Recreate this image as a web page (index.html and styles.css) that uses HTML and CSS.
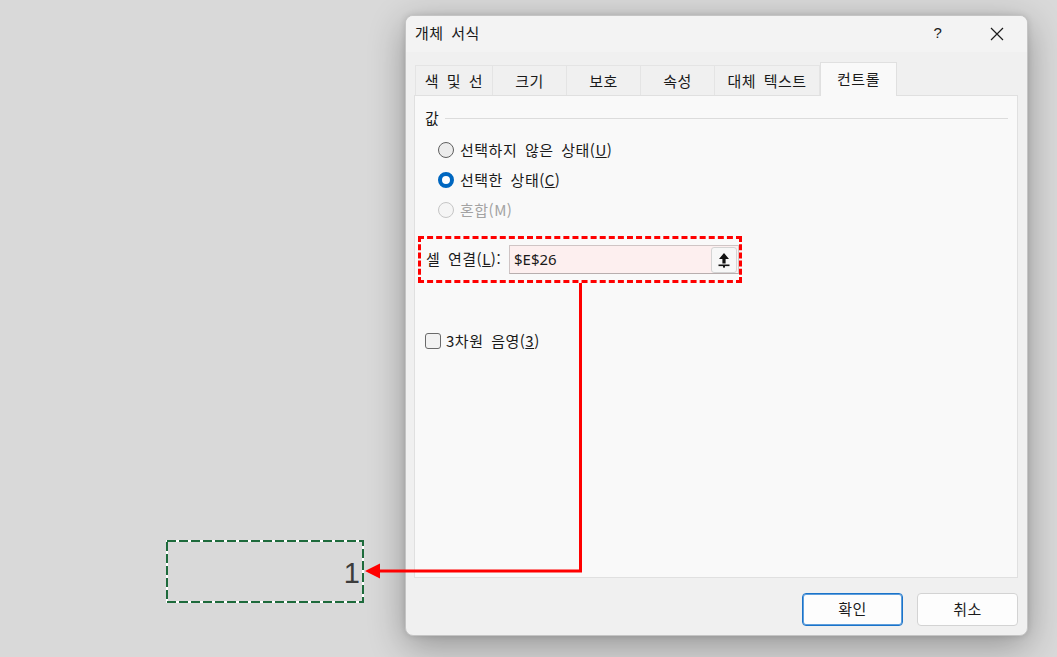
FILE: index.html
```html
<!DOCTYPE html>
<html lang="ko">
<head>
<meta charset="utf-8">
<title>개체 서식</title>
<link rel="stylesheet" href="styles.css">
</head>
<body>
<div class="desk">
  <div class="cell">
    <svg class="cell-ants" width="200" height="64" viewBox="0 0 200 64">
      <rect x="1" y="1" width="196" height="61" fill="none" stroke="#ffffff" stroke-width="2"/>
      <rect x="1" y="1" width="196" height="61" fill="none" stroke="#1e6b3c" stroke-width="2" stroke-dasharray="9 3"/>
    </svg>
    <span class="cell-value">1</span>
  </div>

  <div class="dialog">
    <div class="titlebar">
      <span class="title">개체 서식</span>
      <span class="tb-btn help">?</span>
      <span class="tb-btn close">
        <svg width="14" height="14" viewBox="0 0 14 14"><path d="M1 1 L13 13 M13 1 L1 13" stroke="#1b1b1b" stroke-width="1.2" fill="none"/></svg>
      </span>
    </div>
    <div class="body">
      <div class="tabs">
        <div class="tab t1">색 및 선</div>
        <div class="tab t2">크기</div>
        <div class="tab t3">보호</div>
        <div class="tab t4">속성</div>
        <div class="tab t5">대체 텍스트</div>
        <div class="tab t6 active">컨트롤</div>
      </div>
      <div class="panel">
        <div class="group-head"><span>값</span><div class="rule"></div></div>
        <div class="radios">
          <div class="radio-row"><span class="radio"></span><span class="lbl">선택하지 않은 상태(<u>U</u>)</span></div>
          <div class="radio-row"><span class="radio checked"></span><span class="lbl">선택한 상태(<u>C</u>)</span></div>
          <div class="radio-row disabled"><span class="radio"></span><span class="lbl">혼합(M)</span></div>
        </div>
        <div class="link-box">
          <span class="link-label">셀 연결(<u>L</u>):</span>
          <div class="ref-input">
            <span class="ref-text">$E$26</span>
            <span class="ref-btn">
              <svg width="12" height="16" viewBox="0 0 12 16">
                <path d="M6 1 L11 7 L7.6 7 L7.6 11.5 L4.4 11.5 L4.4 7 L1 7 Z" fill="#111"/>
                <rect x="0.5" y="12.5" width="11" height="1.6" fill="#111"/>
                <rect x="5" y="14" width="2" height="1.6" fill="#111"/>
              </svg>
            </span>
          </div>
        </div>
        <div class="check-row"><span class="checkbox"></span><span class="lbl">3차원 음영(<u>3</u>)</span></div>
      </div>
      <div class="footer">
        <span class="btn primary">확인</span>
        <span class="btn">취소</span>
      </div>
    </div>
  </div>

  <svg class="connector" width="1057" height="657" viewBox="0 0 1057 657">
    <path d="M580.5 283 L580.5 571 L378 571" fill="none" stroke="#ff0000" stroke-width="3"/>
    <polygon points="365,571 380,563.5 380,578.5" fill="#ff0000"/>
  </svg>
</div>
</body>
</html>
```

FILE: styles.css
```css
html, body {
  margin: 0;
  padding: 0;
}
body {
  background: #d9d9d9;
  font-family: "Noto Sans CJK KR", "Noto Sans", sans-serif;
  color: #1a1a1a;
  font-size: 15px;
  letter-spacing: 0.5px;
  word-spacing: 3px;
}
.desk {
  position: relative;
  width: 1057px;
  height: 657px;
  overflow: hidden;
}

/* spreadsheet cell with marching ants */
.cell {
  position: absolute;
  left: 166px;
  top: 540px;
  width: 200px;
  height: 64px;
  display: flex;
  align-items: flex-end;
  justify-content: flex-end;
}
.cell-ants {
  position: absolute;
  left: 0;
  top: 0;
}
.cell-value {
  font-family: "Liberation Sans", Arial, sans-serif;
  font-size: 29px;
  line-height: 29px;
  letter-spacing: 0;
  color: #3c3c3c;
  padding-right: 6px;
  padding-bottom: 16px;
}

/* dialog window */
.dialog {
  position: absolute;
  left: 405px;
  top: 15px;
  width: 623px;
  height: 621px;
  box-sizing: border-box;
  border: 1px solid #c4c4c4;
  border-radius: 8px;
  background: #f0f0f0;
  box-shadow: 0 10px 36px rgba(0, 0, 0, 0.32), 0 0 6px rgba(0, 0, 0, 0.12);
  display: flex;
  flex-direction: column;
  overflow: hidden;
}
.titlebar {
  height: 36px;
  flex: none;
  background: #f3f3f3;
  display: flex;
  align-items: center;
}
.title {
  flex: 1;
  padding-left: 9px;
  padding-bottom: 3px;
  font-size: 15px;
}
.tb-btn {
  height: 36px;
  display: flex;
  align-items: center;
  justify-content: center;
}
.help {
  width: 58px;
  box-sizing: border-box;
  padding-bottom: 3px;
  font-family: "Liberation Sans", Arial, sans-serif;
  font-size: 15px;
}
.close {
  width: 60px;
}
.body {
  flex: 1;
  display: flex;
  flex-direction: column;
  padding: 10px 9px 0 8px;
}

/* tabs */
.tabs {
  display: flex;
  align-items: flex-end;
  height: 33px;
  padding-left: 1px;
  position: relative;
  z-index: 1;
}
.tab {
  box-sizing: border-box;
  height: 30px;
  border: 1px solid #e4e4e4;
  border-bottom: none;
  border-left: none;
  background: #f0f0f0;
  display: flex;
  align-items: center;
  justify-content: center;
  font-size: 15px;
  padding-bottom: 1px;
}
.t1 { width: 78px; border-left: 1px solid #e4e4e4; }
.t2 { width: 74px; }
.t3 { width: 74px; }
.t4 { width: 74px; }
.t5 { width: 105px; }
.t6 { width: 77px; }
.tab.active {
  height: 34px;
  margin-bottom: -1px;
  background: #f9f9f9;
  border: 1px solid #e0e0e0;
  border-bottom: none;
  padding-bottom: 3px;
}

/* panel */
.panel {
  box-sizing: border-box;
  height: 483px;
  border: 1px solid #e0e0e0;
  background: #f9f9f9;
  display: flex;
  flex-direction: column;
}
.group-head {
  display: flex;
  align-items: center;
  height: 20px;
  margin: 12px 9px 0 10px;
}
.group-head span {
  padding-bottom: 2px;
}
.group-head .rule {
  flex: 1;
  height: 1px;
  background: #dcdcdc;
  margin-left: 6px;
}
.radios {
  margin: 7px 0 0 23px;
  display: flex;
  flex-direction: column;
}
.radio-row {
  height: 30px;
  display: flex;
  align-items: center;
  gap: 6px;
}
.radio-row .lbl {
  padding-bottom: 2px;
}
.radio {
  box-sizing: border-box;
  width: 16px;
  height: 16px;
  border-radius: 50%;
  border: 1px solid #5f5f5f;
  background: #ececec;
}
.radio.checked {
  border: 4.5px solid #0067c0;
  background: #ffffff;
}
.radio-row.disabled {
  color: #a3a3a3;
}
.radio-row.disabled .radio {
  border-color: #c6c6c6;
  background: #f5f5f5;
}

/* cell link box */
.link-box {
  box-sizing: border-box;
  width: 324px;
  height: 47px;
  margin: 11px 0 0 3px;
  border: 3px dashed #ff0000;
  display: flex;
  align-items: center;
  padding-left: 5px;
}
.link-label {
  width: 83px;
  flex: none;
  padding-bottom: 3px;
}
.ref-input {
  box-sizing: border-box;
  width: 230px;
  height: 29px;
  border: 1px solid #cfc5c5;
  border-bottom-color: #b8aeae;
  background: #fdefef;
  display: flex;
  align-items: center;
  padding: 0 1px 0 4px;
}
.ref-text {
  flex: 1;
  font-family: "Noto Sans", sans-serif;
  font-size: 15px;
  letter-spacing: 0;
  padding-bottom: 2px;
}
.ref-btn {
  box-sizing: border-box;
  width: 26px;
  height: 26px;
  border: 1px solid #d4d4d4;
  border-radius: 3px;
  background: #f7f7f7;
  display: flex;
  align-items: center;
  justify-content: center;
}

/* checkbox */
.check-row {
  display: flex;
  align-items: center;
  gap: 5px;
  margin: 50px 0 0 10px;
  height: 16px;
}
.check-row .lbl {
  padding-bottom: 1px;
}
.checkbox {
  box-sizing: border-box;
  width: 16px;
  height: 16px;
  border: 1px solid #6a6a6a;
  border-radius: 3px;
  background: #f2f2f2;
}

/* footer buttons */
.footer {
  display: flex;
  justify-content: flex-end;
  gap: 14px;
  padding-top: 15px;
}
.btn {
  box-sizing: border-box;
  width: 101px;
  height: 33px;
  border: 1px solid #d3d3d3;
  border-radius: 4px;
  background: #fdfdfd;
  display: flex;
  align-items: center;
  justify-content: center;
  font-size: 15px;
  padding-bottom: 2px;
}
.btn.primary {
  border: 1px solid #1a73c9;
  box-shadow: inset 0 0 0 1px #5e9edc;
}

.connector {
  position: absolute;
  left: 0;
  top: 0;
  pointer-events: none;
}
```
